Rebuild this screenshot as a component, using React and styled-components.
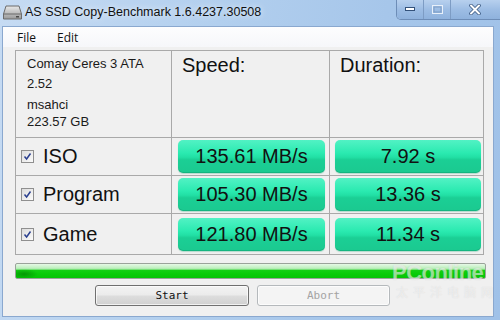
import React from 'react'
import styled, {createGlobalStyle} from 'styled-components'

const Global = createGlobalStyle`
  html, body {
    margin: 0;
    padding: 0;
    width: 500px;
    height: 320px;
    overflow: hidden;
  }
  body {
    font-family: "Liberation Sans", Arial, sans-serif;
  }
`

const Frame = styled.div`
  position: relative;
  width: 500px;
  height: 320px;
  display: flex;
  flex-direction: column;
  background: linear-gradient(100deg, #c6dbf3 0%, #b2cfee 40%, #a6c6ea 70%, #9fc1e8 100%);
  overflow: hidden;
`

const TitleBar = styled.div`
  height: 27px;
  display: flex;
  align-items: flex-start;
  flex-shrink: 0;
`

const AppIcon = styled.svg`
  margin: 5px 0 0 3px;
  flex-shrink: 0;
`

const Title = styled.div`
  margin: 5px 0 0 3px;
  font-family: "Liberation Sans", Arial, sans-serif;
  font-size: 12.5px;
  color: #101010;
  text-shadow: 0 0 6px rgba(255,255,255,0.9);
  white-space: nowrap;
`

const Controls = styled.div`
  margin-left: auto;
  display: flex;
  height: 19px;
  border: 1px solid #6d8db7;
  border-top: none;
  border-radius: 0 0 5px 5px;
  overflow: hidden;
  margin-right: -10px;
  box-shadow: inset 0 0 0 1px rgba(255,255,255,0.45);
`

const CtrlBtn = styled.div`
  width: ${p => p.w}px;
  height: 19px;
  display: flex;
  align-items: center;
  justify-content: center;
  background: linear-gradient(#b7d0ee, #9dbde4 50%, #8fb2dd 100%);
  border-left: ${p => (p.first ? 'none' : '1px solid #7d9cc4')};
`

const Client = styled.div`
  flex: 1;
  margin: 0 7px 4px 3px;
  background: #f0f0f0;
  display: flex;
  flex-direction: column;
  box-shadow: 0 0 0 1px #8aa8cf;
`

const MenuBar = styled.div`
  height: 20px;
  display: flex;
  align-items: center;
  padding-left: 14px;
  gap: 21px;
  background: linear-gradient(#fdfdfe, #f6f7fa);
  font-family: "Open Sans", "Liberation Sans", sans-serif;
  font-size: 12px;
  color: #111;
`

const Content = styled.div`
  padding: 3px 0 0 12px;
  display: flex;
  flex-direction: column;
`

const Grid = styled.div`
  width: 467px;
  display: grid;
  grid-template-columns: 155px 157px 153px;
  grid-template-rows: 86px 37px 37px 40px;
  gap: 1px;
  background: #a9a9a9;
  border: 1px solid #a9a9a9;
`

const Cell = styled.div`
  background: #f0f0f0;
  display: flex;
  align-items: ${p => (p.top ? 'flex-start' : 'center')};
`

const Info = styled.div`
  padding: 5px 0 0 11px;
  font-size: 13px;
  color: #1a1a1a;
  line-height: 16px;
`

const InfoLine = styled.div`
  margin-top: ${p => p.gap || 0}px;
`

const Heading = styled.div`
  font-size: 20px;
  color: #111;
  padding: 3px 0 0 10px;
`

const Label = styled.label`
  display: flex;
  align-items: center;
  font-size: 20px;
  color: #111;
  padding-left: 5px;
  gap: 9px;
`

const Check = styled.span`
  width: 11px;
  height: 11px;
  border: 1px solid #8f8f8f;
  background: linear-gradient(135deg, #dcdcdc, #fbfbfb);
  display: flex;
  align-items: center;
  justify-content: center;
`

const Result = styled.div`
  flex: 1;
  height: 33px;
  margin: ${p => p.m};
  border-radius: 5px;
  display: flex;
  align-items: center;
  justify-content: center;
  font-size: 20px;
  color: #111;
  background: linear-gradient(#52f2c4 0%, #2aeab0 40%, #22e0a5 52%, #1bcf95 60%, #1bc990 100%);
  box-shadow: inset 0 -1px 0 rgba(0,120,80,0.25), 0 1px 1px rgba(0,150,100,0.25);
`

const Progress = styled.div`
  width: 469px;
  height: 14px;
  margin-top: 8px;
  border: 1px solid #9aa39a;
  border-radius: 2px;
  background:
    radial-gradient(ellipse 14px 5px at 8px 10px, rgba(0,110,0,0.55), transparent),
    linear-gradient(#e6f8e6 0%, #c4f1c4 25%, #a6eaa6 38%, #14d014 42%, #08cc08 70%, #05c405 100%);
`

const Buttons = styled.div`
  display: flex;
  gap: 8px;
  margin: 6px 0 0 80px;
`

const Button = styled.button`
  width: ${p => p.w}px;
  height: 21px;
  border-radius: 3px;
  font-family: "DejaVu Sans Mono", "Liberation Mono", monospace;
  font-size: 11px;
  padding: 0;
  border: 1px solid ${p => (p.disabled ? '#b5b9bc' : '#707070')};
  color: ${p => (p.disabled ? '#a3a3a3' : '#111')};
  background: ${p =>
    p.disabled
      ? '#f4f4f4'
      : 'linear-gradient(#f3f3f3 0%, #ebebeb 48%, #dddddd 52%, #d0d0d0 100%)'};
  box-shadow: inset 0 0 0 1px rgba(255,255,255,0.7);
`

const Watermark = styled.div`
  position: absolute;
  left: 392px;
  top: 262px;
  color: rgba(255,255,255,0.5);
  font-family: "Liberation Sans", Arial, sans-serif;
  text-shadow: 0 0 1px rgba(150,150,150,0.3);
  pointer-events: none;
  line-height: 1;
`

const WmBig = styled.div`
  font-size: 22px;
  font-weight: bold;
  letter-spacing: -0.5px;
`

const WmSmall = styled.div`
  font-family: "Noto Sans CJK SC", sans-serif;
  font-size: 12px;
  letter-spacing: 5px;
  margin-top: 2px;
  margin-left: 4px;
`

const rows = [
  {name: 'ISO', speed: '135.61 MB/s', time: '7.92 s'},
  {name: 'Program', speed: '105.30 MB/s', time: '13.36 s'},
  {name: 'Game', speed: '121.80 MB/s', time: '11.34 s'},
]

function DiskIcon() {
  return (
    <AppIcon width="19" height="15" viewBox="0 0 19 15">
      <defs>
        <linearGradient id="dk" x1="0" y1="0" x2="0" y2="1">
          <stop offset="0" stopColor="#e8e8e8" />
          <stop offset="1" stopColor="#9a9a9a" />
        </linearGradient>
      </defs>
      <path d="M3 1 H16 L18.5 9 V14 H0.5 V9 Z" fill="url(#dk)" stroke="#6b6b6b" />
      <path d="M0.5 9 H18.5" stroke="#6b6b6b" />
      <rect x="13" y="11" width="3" height="1.5" fill="#4a4a4a" />
    </AppIcon>
  )
}

function CheckMark() {
  return (
    <svg width="9" height="9" viewBox="0 0 9 9">
      <path d="M1.5 4.5 L3.6 7 L7.5 1.5" fill="none" stroke="#2a3f8f" strokeWidth="1.5" />
    </svg>
  )
}

export default function App() {
  return (
    <>
      <Global />
      <Frame>
        <TitleBar>
          <DiskIcon />
          <Title>AS SSD Copy-Benchmark 1.6.4237.30508</Title>
          <Controls>
            <CtrlBtn w={26} first>
              <svg width="10" height="5"><rect x="0.5" y="0.5" width="9" height="3" fill="#fff" stroke="#34527a" /></svg>
            </CtrlBtn>
            <CtrlBtn w={26}>
              <svg width="11" height="9"><rect x="0.5" y="0.5" width="10" height="8" fill="none" stroke="#e8f0fa" strokeWidth="1" /><rect x="2" y="2" width="7" height="5" fill="none" stroke="#7d9cc4" /></svg>
            </CtrlBtn>
            <CtrlBtn w={58}>
              <svg width="12" height="11" viewBox="0 0 12 11" style={{marginRight: 10}}>
                <path d="M2 1.5 L10 9.5 M10 1.5 L2 9.5" stroke="#3c5a82" strokeWidth="3.6" strokeLinecap="round" />
                <path d="M2 1.5 L10 9.5 M10 1.5 L2 9.5" stroke="#fff" strokeWidth="2" strokeLinecap="round" />
              </svg>
            </CtrlBtn>
          </Controls>
        </TitleBar>
        <Client>
          <MenuBar>
            <span>File</span>
            <span>Edit</span>
          </MenuBar>
          <Content>
            <Grid>
              <Cell top>
                <Info>
                  <InfoLine>Comay Ceres 3 ATA</InfoLine>
                  <InfoLine gap={4}>2.52</InfoLine>
                  <InfoLine gap={5}>msahci</InfoLine>
                  <InfoLine gap={1}>223.57 GB</InfoLine>
                </Info>
              </Cell>
              <Cell top><Heading>Speed:</Heading></Cell>
              <Cell top><Heading>Duration:</Heading></Cell>
              {rows.map(r => (
                <React.Fragment key={r.name}>
                  <Cell>
                    <Label>
                      <Check><CheckMark /></Check>
                      {r.name}
                    </Label>
                  </Cell>
                  <Cell>
                    <Result m="0 4px 0 6px">{r.speed}</Result>
                  </Cell>
                  <Cell>
                    <Result m="0 2px 0 5px">{r.time}</Result>
                  </Cell>
                </React.Fragment>
              ))}
            </Grid>
            <Progress />
            <Buttons>
              <Button w={154}>Start</Button>
              <Button w={133} disabled>Abort</Button>
            </Buttons>
          </Content>
        </Client>
        <Watermark>
          <WmBig>PConline</WmBig>
          <WmSmall>太平洋电脑网</WmSmall>
        </Watermark>
      </Frame>
    </>
  )
}
